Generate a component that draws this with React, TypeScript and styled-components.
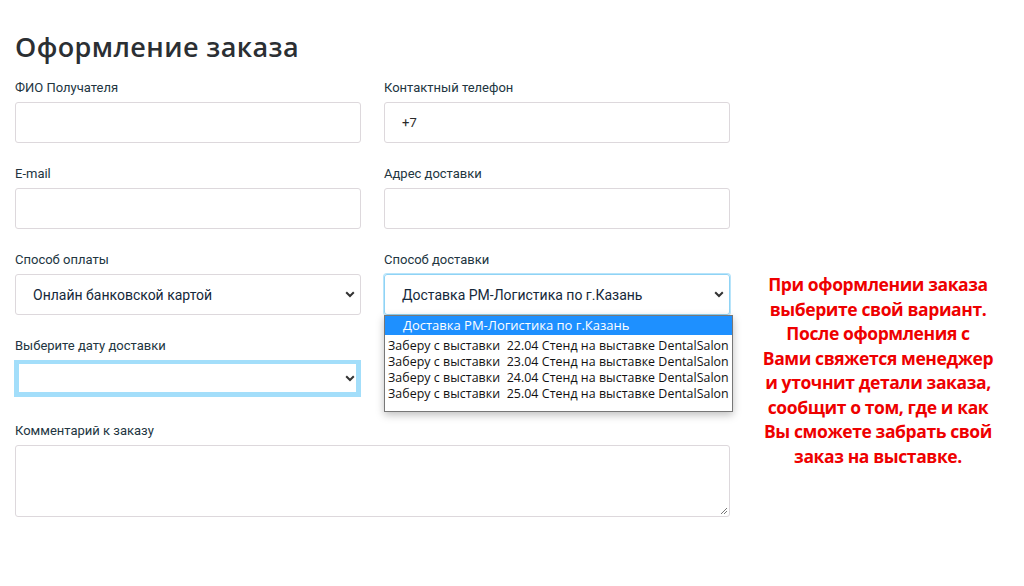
import styled, { createGlobalStyle } from 'styled-components';

const GlobalStyle = createGlobalStyle`
  body {
    margin: 0;
    background: #fff;
    font-family: Roboto, 'Noto Sans', sans-serif;
  }
`;

const deliveryOptions = [
  'Заберу с выставки  22.04 Стенд на выставке DentalSalon',
  'Заберу с выставки  23.04 Стенд на выставке DentalSalon',
  'Заберу с выставки  24.04 Стенд на выставке DentalSalon',
  'Заберу с выставки  25.04 Стенд на выставке DentalSalon',
];

const noticeLines = [
  'При оформлении заказа',
  'выберите свой вариант.',
  'После оформления с',
  'Вами свяжется менеджер',
  'и уточнит детали заказа,',
  'сообщит о том, где и как',
  'Вы сможете забрать свой',
  'заказ на выставке.',
];

function Chevron() {
  return (
    <svg width="10" height="7" viewBox="0 0 10 7">
      <path d="M1.2 1.3 L5 5 L8.8 1.3" fill="none" stroke="#333" strokeWidth="2" />
    </svg>
  );
}

export default function App() {
  return (
    <>
      <GlobalStyle />
      <Page>
        <Form>
          <Title>Оформление заказа</Title>
          <Grid>
            <Field>
              <Label>ФИО Получателя</Label>
              <Input />
            </Field>
            <Field>
              <Label>Контактный телефон</Label>
              <Input>+7</Input>
            </Field>
            <Field>
              <Label>E-mail</Label>
              <Input />
            </Field>
            <Field>
              <Label>Адрес доставки</Label>
              <Input />
            </Field>
            <Field>
              <Label>Способ оплаты</Label>
              <Select>
                <span>Онлайн банковской картой</span>
                <Chevron />
              </Select>
            </Field>
            <Field>
              <Label>Способ доставки</Label>
              <SelectWrap>
                <Select $focused>
                  <span>Доставка РМ-Логистика по г.Казань</span>
                  <Chevron />
                </Select>
                <Listbox>
                  <Option $active>Доставка РМ-Логистика по г.Казань</Option>
                  {deliveryOptions.map((o) => (
                    <Option key={o}>{o}</Option>
                  ))}
                </Listbox>
              </SelectWrap>
            </Field>
            <Field>
              <Label>Выберите дату доставки</Label>
              <DateSelect>
                <Chevron />
              </DateSelect>
            </Field>
            <Field />
            <Field $wide>
              <Label>Комментарий к заказу</Label>
              <TextArea>
                <Grip viewBox="0 0 8 8" width="8" height="8">
                  <path d="M7 1 L1 7 M7 4 L4 7" stroke="#777" strokeWidth="1" />
                </Grip>
              </TextArea>
            </Field>
          </Grid>
        </Form>
        <Notice>
          {noticeLines.map((line) => (
            <NoticeLine key={line}>{line}</NoticeLine>
          ))}
        </Notice>
      </Page>
    </>
  );
}

const Page = styled.div`
  display: flex;
  width: 1024px;
  height: 586px;
  box-sizing: border-box;
  padding-left: 15px;
`;

const Form = styled.div`
  width: 715px;
  flex-shrink: 0;
`;

const Title = styled.h1`
  margin: 31px 0 16px;
  font-family: 'Open Sans', sans-serif;
  font-weight: 600;
  font-size: 27px;
  letter-spacing: 0.4px;
  line-height: 32px;
  color: #2b2f33;
`;

const Grid = styled.div`
  display: grid;
  grid-template-columns: 346px 346px;
  column-gap: 23px;
  row-gap: 22px;
`;

const Field = styled.div<{ $wide?: boolean }>`
  display: flex;
  flex-direction: column;
  grid-column: ${(p) => (p.$wide ? '1 / span 2' : 'auto')};
`;

const Label = styled.div`
  font-size: 13px;
  line-height: 17px;
  margin-bottom: 6px;
  color: #22353f;
`;

const Input = styled.div`
  height: 41px;
  box-sizing: border-box;
  border: 1px solid #ddd8dc;
  border-radius: 3px;
  padding: 0 17px;
  display: flex;
  align-items: center;
  font-size: 13px;
  color: #2a2a2a;
`;

const Select = styled.div<{ $focused?: boolean }>`
  height: 41px;
  box-sizing: border-box;
  border: 1px solid ${(p) => (p.$focused ? '#8fd3f5' : '#ddd8dc')};
  box-shadow: ${(p) => (p.$focused ? '0 0 0 1px #b8e4fa' : 'none')};
  border-radius: 3px;
  padding: 0 5px 0 17px;
  display: flex;
  align-items: center;
  justify-content: space-between;
  font-size: 14px;
  color: #15283a;
`;

const SelectWrap = styled.div`
  position: relative;
`;

const Listbox = styled.div`
  position: absolute;
  left: 0;
  top: 41px;
  width: 349px;
  box-sizing: border-box;
  border: 1px solid #777;
  background: #fff;
  box-shadow: 0 3px 8px rgba(0, 0, 0, 0.25);
  padding-bottom: 9px;
  z-index: 2;
`;

const Option = styled.div<{ $active?: boolean }>`
  font-family: 'Open Sans', sans-serif;
  white-space: pre;
  color: ${(p) => (p.$active ? '#fff' : '#111')};
  background: ${(p) => (p.$active ? '#1e90ff' : 'transparent')};
  line-height: ${(p) => (p.$active ? '19px' : '16px')};
  padding-left: ${(p) => (p.$active ? '18px' : '3px')};
  margin-bottom: ${(p) => (p.$active ? '3px' : '0')};
  font-size: ${(p) => (p.$active ? '13px' : '12.4px')};
  letter-spacing: ${(p) => (p.$active ? '0' : '0.05px')};
`;

const DateSelect = styled.div`
  height: 37px;
  box-sizing: border-box;
  border: 5px solid #a3defa;
  border-top-width: 4px;
  margin-left: -1px;
  margin-bottom: 3px;
  display: flex;
  align-items: center;
  justify-content: flex-end;
  padding-right: 1px;
`;

const TextArea = styled.div`
  position: relative;
  height: 72px;
  box-sizing: border-box;
  border: 1px solid #ddd8dc;
  border-radius: 3px;
`;

const Grip = styled.svg`
  position: absolute;
  right: 1px;
  bottom: 1px;
`;

const Notice = styled.div`
  width: 290px;
  margin-left: 3px;
  padding-top: 272px;
  text-align: center;
  font-family: 'Open Sans', sans-serif;
  font-weight: 700;
  font-size: 17.5px;
  line-height: 24.5px;
  color: #ee0000;
  letter-spacing: -0.4px;
`;

const NoticeLine = styled.div`
  white-space: nowrap;
`;
